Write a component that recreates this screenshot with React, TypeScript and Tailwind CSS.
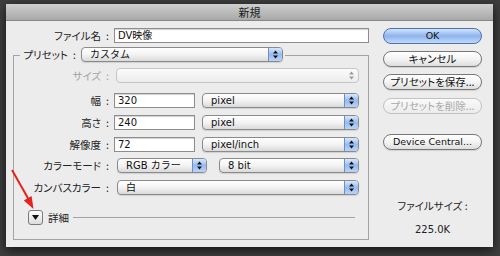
import React from "react";

const jp = "font-['Noto_Sans_CJK_JP',sans-serif] [font-feature-settings:'palt']";
const lat = "font-['DejaVu_Sans','Noto_Sans_CJK_JP',sans-serif]";

function Arrows({ dim = false }: { dim?: boolean }) {
    return (
        <svg width="5" height="9" viewBox="0 0 5 9">
            <polygon points="2.5,0.5 5,3.5 0,3.5" fill={dim ? "#9a9a9a" : "#111"} />
            <polygon points="0,5.5 5,5.5 2.5,8.5" fill={dim ? "#9a9a9a" : "#111"} />
        </svg>
    );
}

function Popup({ label, className, disabled = false }: { label?: string; className: string; disabled?: boolean }) {
    return (
        <div
            className={`h-[15px] flex rounded-[4px] border overflow-hidden ${
                disabled
                    ? "border-[#c6c6c6] bg-gradient-to-b from-[#fbfbfb] to-[#ececec]"
                    : "border-[#8a8a8a] bg-gradient-to-b from-white via-[#f3f3f3] to-[#dadada] shadow-[0_1px_1px_rgba(0,0,0,0.12)]"
            } ${className}`}
        >
            <div className={`flex-1 pl-[8px] text-[10px] leading-[13px] text-[#111] ${lat}`}>{label}</div>
            {disabled ? (
                <div className="w-[13px] flex items-center justify-center">
                    <Arrows dim />
                </div>
            ) : (
                <div className="w-[14px] flex items-center justify-center border-l border-[#6d8fc6] bg-gradient-to-b from-[#d9e7fb] via-[#97bbf0] to-[#b9d4f8]">
                    <Arrows />
                </div>
            )}
        </div>
    );
}

function Field({ value, className }: { value: string; className: string }) {
    return (
        <div
            className={`h-[15px] border border-[#8d8d8d] bg-white shadow-[inset_0_1px_1px_rgba(0,0,0,0.18)] pl-[3px] text-[10px] leading-[13px] text-[#111] ${lat} ${className}`}
        >
            {value}
        </div>
    );
}

function Label({ text, dim = false, className = "w-[100px]" }: { text: string; dim?: boolean; className?: string }) {
    return (
        <div className={`flex justify-end items-center h-[15px] text-[10.5px] ${dim ? "text-[#a2a2a2]" : "text-[#222]"} ${jp} ${className}`}>
            <span>{text}</span>
            <span className="w-[13px] text-center">:</span>
        </div>
    );
}

function Button({ text, ok = false, disabled = false, latin = false, className = "" }: { text: string; ok?: boolean; disabled?: boolean; latin?: boolean; className?: string }) {
    return (
        <div
            className={`h-[16px] w-[99px] rounded-full border flex items-center justify-center leading-none ${latin ? `text-[9.5px] ${lat}` : `text-[10.5px] ${jp}`} ${
                ok
                    ? "border-[#4f72ab] bg-gradient-to-b from-[#d3e4fb] via-[#8db4ee] to-[#c2dafa] text-[#111]"
                    : disabled
                      ? "border-[#c2c2c2] bg-gradient-to-b from-[#fafafa] to-[#ececec] text-[#a8a8a8]"
                      : "border-[#777] bg-gradient-to-b from-white via-[#f4f4f4] to-[#dedede] text-[#111] shadow-[0_1px_1px_rgba(0,0,0,0.12)]"
            } ${className}`}
        >
            {text}
        </div>
    );
}

export default function App() {
    return (
        <div className="relative w-[500px] h-[256px] bg-[#3e3e3e] pt-[4px] pl-[6px] overflow-hidden">
            <div className="w-[487px] h-[243px] flex flex-col shadow-[0_3px_10px_rgba(0,0,0,0.7)]">
                {/* title bar */}
                <div className={`h-[17px] flex items-center justify-center border-b border-[#878787] bg-gradient-to-b from-[#cfcfcf] to-[#a8a8a8] text-[11px] text-[#1a1a1a] ${jp}`}>
                    新規
                </div>

                <div className="flex-1 flex bg-[#ececec]">
                    {/* left side */}
                    <div className="w-[370px] pl-[7px] pt-[7px] flex flex-col">
                        <div className="flex">
                            <Label text="ファイル名" className="w-[101px]" />
                            <Field value="DV映像" className="w-[255px]" />
                        </div>

                        <div className="mt-[4px] w-[356px] flex flex-col">
                            <div className="h-[15px] flex">
                                <div className="self-end h-[7px] w-[7px] border-l border-t border-[#a4a4a4]" />
                                <Label text="プリセット" className="w-[61px]" />
                                <Popup label="カスタム" className="w-[202px]" />
                                <div className="self-end h-[7px] flex-1 ml-[2px] border-r border-t border-[#a4a4a4]" />
                            </div>
                            <div className="h-[178px] border-l border-r border-b border-[#a4a4a4] flex flex-col">
                                <div className="flex mt-[6px]">
                                    <Label text="サイズ" dim />
                                    <Popup disabled className="ml-[2px] w-[243px]" />
                                </div>
                                <div className="flex mt-[10px]">
                                    <Label text="幅" />
                                    <Field value="320" className="w-[81px]" />
                                    <Popup label="pixel" className="ml-[7px] w-[157px]" />
                                </div>
                                <div className="flex mt-[7px]">
                                    <Label text="高さ" />
                                    <Field value="240" className="w-[81px]" />
                                    <Popup label="pixel" className="ml-[7px] w-[157px]" />
                                </div>
                                <div className="flex mt-[7px]">
                                    <Label text="解像度" />
                                    <Field value="72" className="w-[81px]" />
                                    <Popup label="pixel/inch" className="ml-[7px] w-[157px]" />
                                </div>
                                <div className="flex mt-[6px]">
                                    <Label text="カラーモード" />
                                    <Popup label="RGB カラー" className="ml-[3px] w-[90px]" />
                                    <Popup label="8 bit" className="ml-[12px] w-[140px]" />
                                </div>
                                <div className="flex mt-[7px]">
                                    <Label text="カンバスカラー" />
                                    <Popup label="白" className="ml-[3px] w-[242px]" />
                                </div>
                                <div className="flex items-center mt-[15px] pl-[14px]">
                                    <div className="w-[15px] h-[15px] rounded-[3px] border border-[#7a7a7a] bg-gradient-to-b from-white to-[#dcdcdc] flex items-center justify-center">
                                        <svg width="7" height="5" viewBox="0 0 7 5">
                                            <polygon points="0,0 7,0 3.5,5" fill="#111" />
                                        </svg>
                                    </div>
                                    <span className={`ml-[5px] text-[10.5px] text-[#222] ${jp}`}>詳細</span>
                                    <div className="flex-1 h-px ml-[4px] mr-[13px] bg-[#a4a4a4]" />
                                </div>
                            </div>
                        </div>
                    </div>

                    {/* right side */}
                    <div className="flex-1 pl-[7px] pt-[7px] flex flex-col">
                        <Button text="OK" ok latin />
                        <Button text="キャンセル" className="mt-[7px]" />
                        <Button text="プリセットを保存..." className="mt-[7px]" />
                        <Button text="プリセットを削除..." disabled className="mt-[8px]" />
                        <Button text="Device Central..." latin className="mt-[20px]" />
                        <div className="w-[99px] mt-[48px] flex flex-col items-center gap-[8px]">
                            <span className={`text-[10.5px] text-[#222] ${jp}`}>ファイルサイズ :</span>
                            <span className={`text-[10px] text-[#222] ${lat}`}>225.0K</span>
                        </div>
                    </div>
                </div>
            </div>

            {/* red arrow annotation */}
            <svg className="absolute left-0 top-0 pointer-events-none" width="500" height="256" viewBox="0 0 500 256">
                <line x1="12" y1="170" x2="29" y2="200" stroke="#e3231c" strokeWidth="2" />
                <polygon points="31.6,196 23.8,200.6 33.5,209" fill="#e3231c" />
            </svg>
        </div>
    );
}
